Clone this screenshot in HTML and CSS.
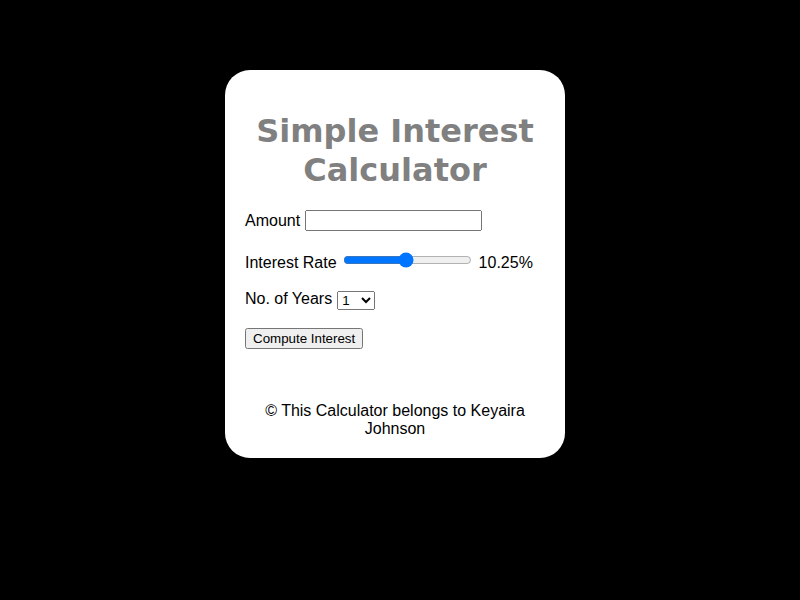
FILE: index.html
```
<!DOCTYPE html>
<html>
<head>
<meta charset="utf-8">
<link rel="stylesheet" href="styles.css">
</head>
<body>
<div class="maindiv">
  <h1 class="title">Simple Interest Calculator</h1>
  <div class="row row-amount">
    <label for="principal">Amount</label>
    <input type="text" id="principal" class="amount">
  </div>
  <div class="row row-rate">
    <label for="rate">Interest Rate</label>
    <input type="range" id="rate" class="rate" min="1" max="20" step="0.25" value="10.25">
    <span class="rate-val">10.25%</span>
  </div>
  <div class="row row-years">
    <label for="years">No. of Years</label>
    <select id="years" class="years">
      <option>1</option><option>2</option><option>3</option><option>4</option><option>5</option>
      <option>6</option><option>7</option><option>8</option><option>9</option><option>10</option>
    </select>
  </div>
  <div class="row row-btn">
    <button class="compute">Compute Interest</button>
  </div>
  <div class="result"></div>
  <footer class="footer">&copy; This Calculator belongs to Keyaira Johnson</footer>
</div>
</body>
</html>
```

FILE: styles.css
```
html, body {
  margin: 0;
  padding: 0;
  background: #000;
}
body {
  font-family: "Liberation Sans", Arial, sans-serif;
  font-size: 16px;
  color: #000;
}
.maindiv {
  background: #fff;
  width: 300px;
  padding: 20px;
  margin: 70px 0 0 225px;
  border-radius: 25px;
}
.title {
  font-family: "DejaVu Sans", Verdana, sans-serif;
  font-weight: bold;
  font-size: 32px;
  line-height: 39px;
  color: #808080;
  text-align: center;
  margin: 22px 0 20px;
}
.row {
  display: flex;
  align-items: center;
  gap: 5px;
}
.row-amount {
  height: 21px;
  margin-bottom: 22px;
}
.amount {
  width: 177px;
  height: 21px;
  box-sizing: border-box;
  margin: 0;
  font-family: "Liberation Sans", Arial, sans-serif;
}
.row-rate {
  height: 20px;
  margin-bottom: 16px;
}
.rate {
  width: 129px;
  margin: 0 3px 6px 1px;
}
.rate-val {
  margin-left: -1px;
}
.row-years {
  height: 20px;
  margin-bottom: 19px;
}
.years {
  width: 38px;
  height: 19px;
  margin: 2px 0 0 0;
  font-family: "Liberation Sans", Arial, sans-serif;
  font-size: 13.33px;
}
.compute {
  font-family: "Liberation Sans", Arial, sans-serif;
  font-size: 13.33px;
  margin: 0;
}
.result {
  height: 53px;
}
.footer {
  text-align: center;
  line-height: 18px;
}
```
